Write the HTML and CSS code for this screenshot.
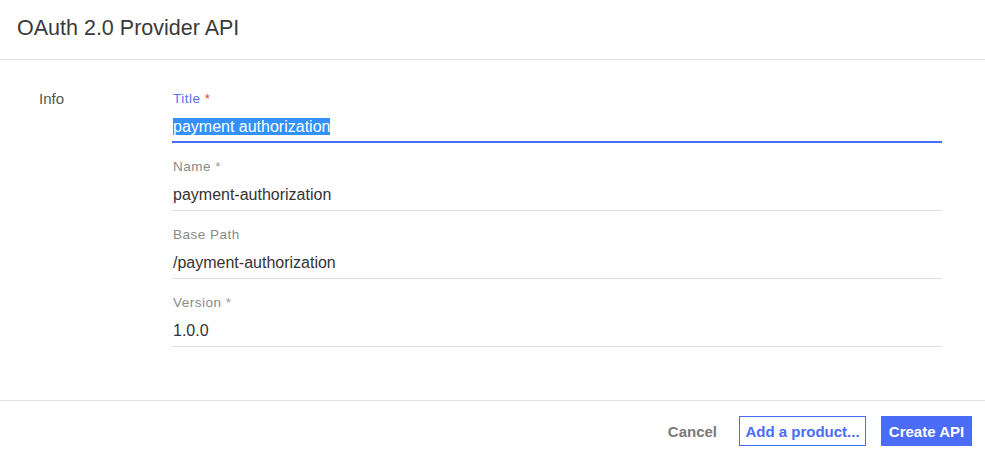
FILE: index.html
```html
<!DOCTYPE html>
<html>
<head>
<meta charset="utf-8">
<link rel="stylesheet" href="styles.css">
</head>
<body>
<div class="dialog">
  <header class="head">
    <h1 class="title">OAuth 2.0 Provider API</h1>
  </header>
  <main class="content">
    <div class="section">
      <div class="section-label">Info</div>
      <div class="fields">
        <div class="field focused">
          <div class="label">Title <span class="req">*</span></div>
          <div class="input"><span class="sel">payment authorization</span></div>
        </div>
        <div class="field">
          <div class="label">Name <span class="req">*</span></div>
          <div class="input">payment-authorization</div>
        </div>
        <div class="field">
          <div class="label">Base Path</div>
          <div class="input">/payment-authorization</div>
        </div>
        <div class="field">
          <div class="label">Version <span class="req">*</span></div>
          <div class="input">1.0.0</div>
        </div>
      </div>
    </div>
  </main>
  <footer class="foot">
    <button class="btn btn-text">Cancel</button>
    <button class="btn btn-outline">Add a product...</button>
    <button class="btn btn-primary">Create API</button>
  </footer>
</div>
</body>
</html>
```
FILE: styles.css
```css
html, body {
  margin: 0;
  padding: 0;
  background: #fff;
}
body {
  font-family: "Liberation Sans", Arial, sans-serif;
  color: #333;
}
.dialog {
  width: 985px;
  height: 461px;
  display: flex;
  flex-direction: column;
}
.head {
  height: 59px;
  border-bottom: 1px solid #e0e0e0;
  display: flex;
  align-items: center;
  padding-left: 17px;
  box-sizing: content-box;
}
.title {
  margin: 0;
  font-size: 21.5px;
  font-weight: normal;
  color: #3a3a3a;
  position: relative;
  top: -1px;
}
.content {
  flex: 1;
  border-bottom: 1px solid #e0e0e0;
}
.section {
  display: flex;
  padding-top: 31px;
}
.section-label {
  width: 133px;
  padding-left: 39px;
  font-size: 15px;
  color: #555;
  line-height: 16px;
}
.fields {
  width: 770px;
  display: flex;
  flex-direction: column;
  gap: 16px;
}
.field {
  display: flex;
  flex-direction: column;
}
.label {
  font-size: 13.5px;
  line-height: 16px;
  letter-spacing: 0.5px;
  color: #8a8a8a;
  padding-left: 1px;
}
.req {
  color: #999;
}
.focused .label {
  color: #5a72f2;
}
.focused .req {
  color: #e0442c;
}
.input {
  font-size: 16px;
  line-height: 16px;
  color: #333;
  padding: 12px 0 7px 1px;
  border-bottom: 1px solid #dedede;
}
.focused .input {
  border-bottom: 2px solid #4a6cf7;
  padding-bottom: 6px;
  padding-top: 11px;
}
.sel {
  display: inline-block;
  background: #3390ff;
  color: #fff;
  line-height: 17px;
}
.foot {
  height: 60px;
  display: flex;
  align-items: center;
  justify-content: flex-end;
  padding-right: 13px;
}
.btn {
  font-family: "Liberation Sans", Arial, sans-serif;
  font-size: 15px;
  font-weight: bold;
  height: 30px;
  margin: 0;
  border: 1px solid transparent;
  background: none;
  cursor: pointer;
  box-sizing: border-box;
}
.btn-text {
  color: #7a7a7a;
  padding: 0 10px;
  margin-right: 11px;
}
.btn-outline {
  color: #4a6cf7;
  border-color: #4a6cf7;
  background: #fff;
  width: 127px;
  padding: 0;
  margin-right: 15px;
}
.btn-primary {
  color: #fff;
  background: #4a6cf7;
  border-color: #4a6cf7;
  width: 91px;
  padding: 0;
}
```
